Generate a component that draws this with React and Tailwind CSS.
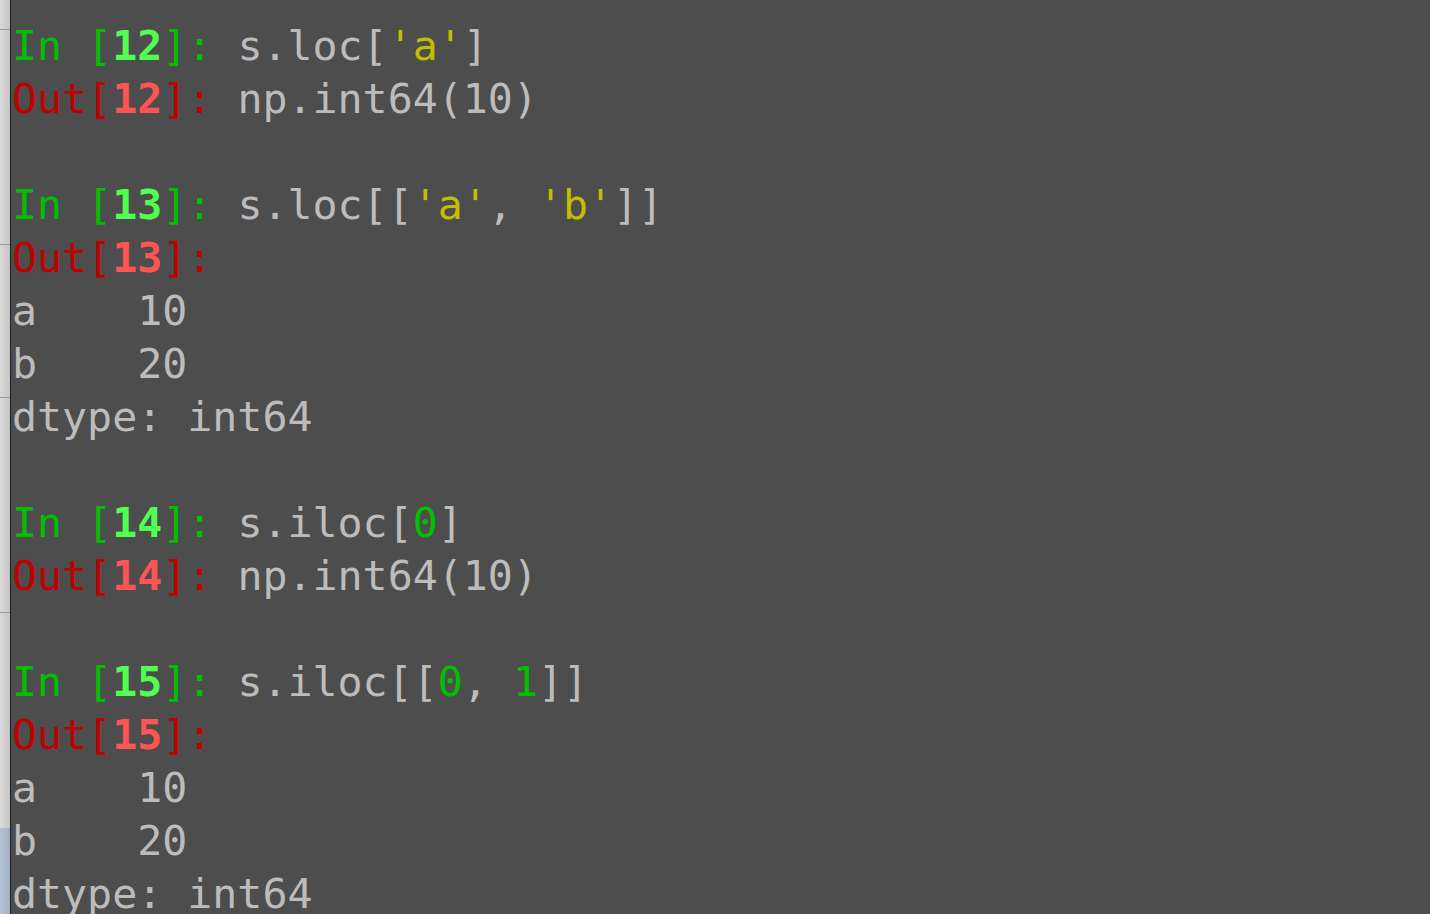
import React from "react";

const G = ({ children }) => <span className="text-[#00c000]">{children}</span>;
const GB = ({ children }) => <span className="text-[#50ff50] font-bold">{children}</span>;
const R = ({ children }) => <span className="text-[#c00000]">{children}</span>;
const RB = ({ children }) => <span className="text-[#ff5454] font-bold">{children}</span>;
const Y = ({ children }) => <span className="text-[#c0c000]">{children}</span>;

const In = ({ n }) => (
  <>
    <G>In [</G>
    <GB>{n}</GB>
    <G>]: </G>
  </>
);
const Out = ({ n, sp = true }) => (
  <>
    <R>Out[</R>
    <RB>{n}</RB>
    <R>]:{sp ? " " : ""}</R>
  </>
);

const Line = ({ children }) => <div className="h-[53px] whitespace-pre">{children}</div>;

export default function App() {
  return (
    <div className="w-[1430px] h-[914px] overflow-hidden flex bg-[#4d4d4d]">
      <div className="w-[10px] shrink-0 flex flex-col bg-gradient-to-r from-[#dcdcdc] to-[#c4c4c4]">
        <div className="h-[30px] border-b border-[#9a9a9a]" />
        <div className="h-[215px] border-b border-[#9a9a9a]" />
        <div className="h-[153px] border-b border-[#9a9a9a]" />
        <div className="h-[215px] border-b border-[#9a9a9a]" />
        <div className="h-[215px]" />
        <div className="flex-1 bg-gradient-to-r from-[#b4c0d4] to-[#a4b0c4]" />
      </div>
      <div className="w-px shrink-0 bg-[#1e1e1e]" />
      <div
        className="flex-1 pl-[1px] pt-[19px] text-[41.6px] leading-[53px] text-[#bcbcbc]"
        style={{ fontFamily: '"DejaVu Sans Mono", monospace' }}
      >
        <Line>
          <In n="12" />s.loc[<Y>'a'</Y>]
        </Line>
        <Line>
          <Out n="12" />np.int64(10)
        </Line>
        <Line> </Line>
        <Line>
          <In n="13" />s.loc[[<Y>'a'</Y>, <Y>'b'</Y>]]
        </Line>
        <Line>
          <Out n="13" sp={false} />
        </Line>
        <Line>a    10</Line>
        <Line>b    20</Line>
        <Line>dtype: int64</Line>
        <Line> </Line>
        <Line>
          <In n="14" />s.iloc[<G>0</G>]
        </Line>
        <Line>
          <Out n="14" />np.int64(10)
        </Line>
        <Line> </Line>
        <Line>
          <In n="15" />s.iloc[[<G>0</G>, <G>1</G>]]
        </Line>
        <Line>
          <Out n="15" sp={false} />
        </Line>
        <Line>a    10</Line>
        <Line>b    20</Line>
        <Line>dtype: int64</Line>
      </div>
    </div>
  );
}
